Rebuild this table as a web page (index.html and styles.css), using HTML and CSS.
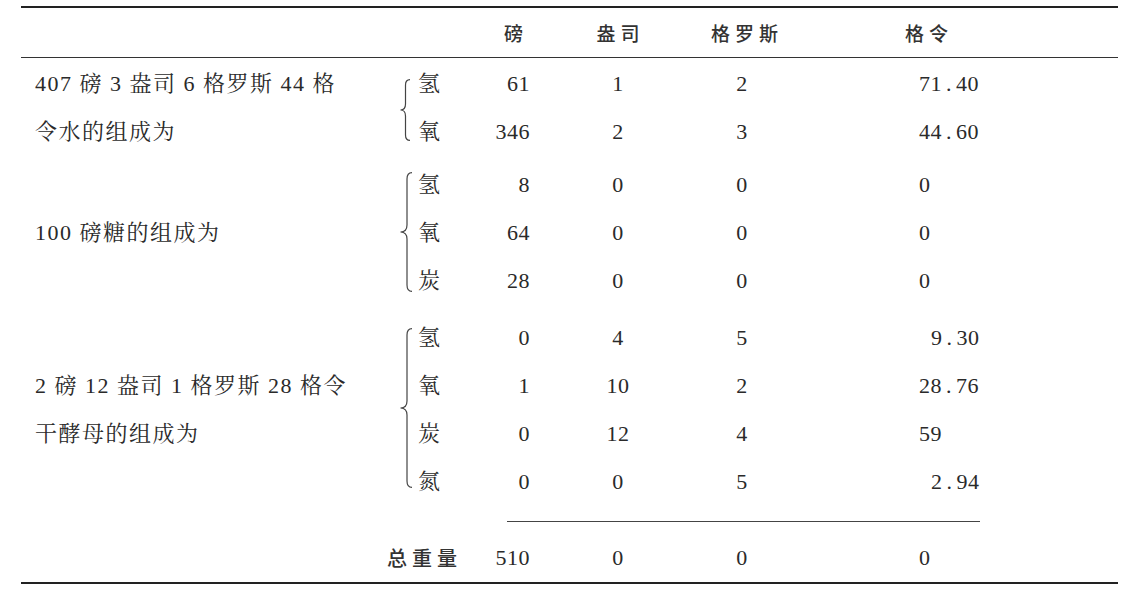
FILE: index.html
```html
<!DOCTYPE html>
<html lang="zh-CN">
<head>
<meta charset="utf-8">
<title>组成表</title>
<link rel="stylesheet" href="styles.css">
</head>
<body>
<div class="sheet">
  <div class="rule-top"></div>

  <div class="row-grid head">
    <div></div><div></div><div></div>
    <div class="h h-lb">磅</div>
    <div class="h h-oz">盎司</div>
    <div class="h h-gross">格罗斯</div>
    <div class="h h-grain">格令</div>
  </div>

  <div class="row-grid group g1">
    <svg class="brace brace-2" width="12" height="62" viewBox="0 0 12 62"><path d="M11,0.6 C8,0.6 6.5,2.5 6.5,6 L6.5,25 C6.5,28.5 5,31 1.5,31 C5,31 6.5,33.5 6.5,37 L6.5,56 C6.5,59.5 8,61.4 11,61.4"/></svg>
    <div class="label">407 磅 3 盎司 6 格罗斯 44 格</div>
    <div class="el">氢</div><div class="n-lb">61</div><div class="n-c">1</div><div class="n-c">2</div><div class="n-gr">71<span class="dp">.</span>40</div>
    <div class="label">令水的组成为</div>
    <div class="el">氧</div><div class="n-lb">346</div><div class="n-c">2</div><div class="n-c">3</div><div class="n-gr">44<span class="dp">.</span>60</div>
  </div>

  <div class="row-grid group g2">
    <svg class="brace brace-3" width="14" height="120" viewBox="0 0 14 120"><path d="M13,0.6 C9.5,0.6 8,2.5 8,7 L8,53 C8,57.5 6,60 1.5,60 C6,60 8,62.5 8,67 L8,113 C8,117.5 9.5,119.4 13,119.4"/></svg>
    <div class="label"></div>
    <div class="el">氢</div><div class="n-lb">8</div><div class="n-c">0</div><div class="n-c">0</div><div class="n-gr">0</div>
    <div class="label">100 磅糖的组成为</div>
    <div class="el">氧</div><div class="n-lb">64</div><div class="n-c">0</div><div class="n-c">0</div><div class="n-gr">0</div>
    <div class="label"></div>
    <div class="el">炭</div><div class="n-lb">28</div><div class="n-c">0</div><div class="n-c">0</div><div class="n-gr">0</div>
  </div>

  <div class="row-grid group g3">
    <svg class="brace brace-4" width="14" height="160" viewBox="0 0 14 160"><path d="M13,0.6 C9.5,0.6 8,2.5 8,7 L8,73 C8,77.5 6,80 1.5,80 C6,80 8,82.5 8,87 L8,153 C8,157.5 9.5,159.4 13,159.4"/></svg>
    <div class="label"></div>
    <div class="el">氢</div><div class="n-lb">0</div><div class="n-c">4</div><div class="n-c">5</div><div class="n-gr pad1">9<span class="dp">.</span>30</div>
    <div class="label">2 磅 12 盎司 1 格罗斯 28 格令</div>
    <div class="el">氧</div><div class="n-lb">1</div><div class="n-c">10</div><div class="n-c">2</div><div class="n-gr">28<span class="dp">.</span>76</div>
    <div class="label">干酵母的组成为</div>
    <div class="el">炭</div><div class="n-lb">0</div><div class="n-c">12</div><div class="n-c">4</div><div class="n-gr">59</div>
    <div class="label"></div>
    <div class="el">氮</div><div class="n-lb">0</div><div class="n-c">0</div><div class="n-c">5</div><div class="n-gr pad1">2<span class="dp">.</span>94</div>
  </div>

  <div class="subtotal-rule"></div>

  <div class="row-grid total">
    <div class="total-label">总重量</div>
    <div class="n-lb">510</div><div class="n-c">0</div><div class="n-c">0</div><div class="n-gr">0</div>
  </div>

  <div class="rule-bottom"></div>
</div>
</body>
</html>
```

FILE: styles.css
```css
body {
  margin: 0;
  background: #ffffff;
  color: #2a2a2a;
  font-family: "Liberation Serif", "Noto Serif CJK SC", "Noto Sans CJK SC", serif;
  font-size: 22px;
}

.sheet {
  margin: 6px 0 0 21px;
  width: 1097px;
}

.rule-top {
  height: 2px;
  background: #222222;
}

.rule-bottom {
  height: 2px;
  background: #222222;
}

.row-grid {
  display: grid;
  grid-template-columns: 375px 18px 48px 68px 176px 72px 340px;
  white-space: nowrap;
}

.head {
  height: 49px;
  line-height: 49px;
  border-bottom: 1px solid #333333;
}

.h {
  font-family: "Noto Sans CJK SC", sans-serif;
  font-weight: 500;
  font-size: 19px;
  letter-spacing: 5px;
  color: #333333;
}

.h-lb { text-align: right; padding-right: 2px; }
.h-oz { text-align: center; padding-left: 5px; }
.h-gross { text-align: center; padding-left: 5px; }
.h-grain { text-align: left; padding-left: 127px; }

.group {
  grid-auto-rows: 48px;
  line-height: 48px;
}

.g1 { margin-top: 2px; }
.g2 { margin-top: 5px; }
.g3 { margin-top: 9px; }

.brace {
  grid-column: 2;
  display: block;
  margin-left: 3px;
  fill: none;
  stroke: #444444;
  stroke-width: 1.2;
}

.brace-2 { grid-row: 1 / span 2; margin-top: 19px; }
.brace-3 { grid-row: 1 / span 3; margin-top: 11px; }
.brace-4 { grid-row: 1 / span 4; margin-top: 14px; }

.label {
  padding-left: 14px;
  letter-spacing: 1.5px;
}

.el {
  padding-left: 4px;
}

.n-lb {
  text-align: right;
  letter-spacing: 0.5px;
}

.n-c {
  text-align: center;
  letter-spacing: 0.5px;
}

.n-gr {
  padding-left: 141px;
  letter-spacing: 0.5px;
}

.pad1 {
  padding-left: 153px;
}

.dp {
  margin: 0 4px;
}

.subtotal-rule {
  height: 1px;
  background: #444444;
  margin: 15px 138px 0 486px;
}

.total {
  margin-top: 12px;
  height: 48px;
  line-height: 48px;
}

.total-label {
  grid-column: 1 / span 3;
  text-align: right;
  font-family: "Noto Sans CJK SC", sans-serif;
  font-weight: 500;
  font-size: 20px;
  letter-spacing: 5px;
  color: #333333;
}
```
